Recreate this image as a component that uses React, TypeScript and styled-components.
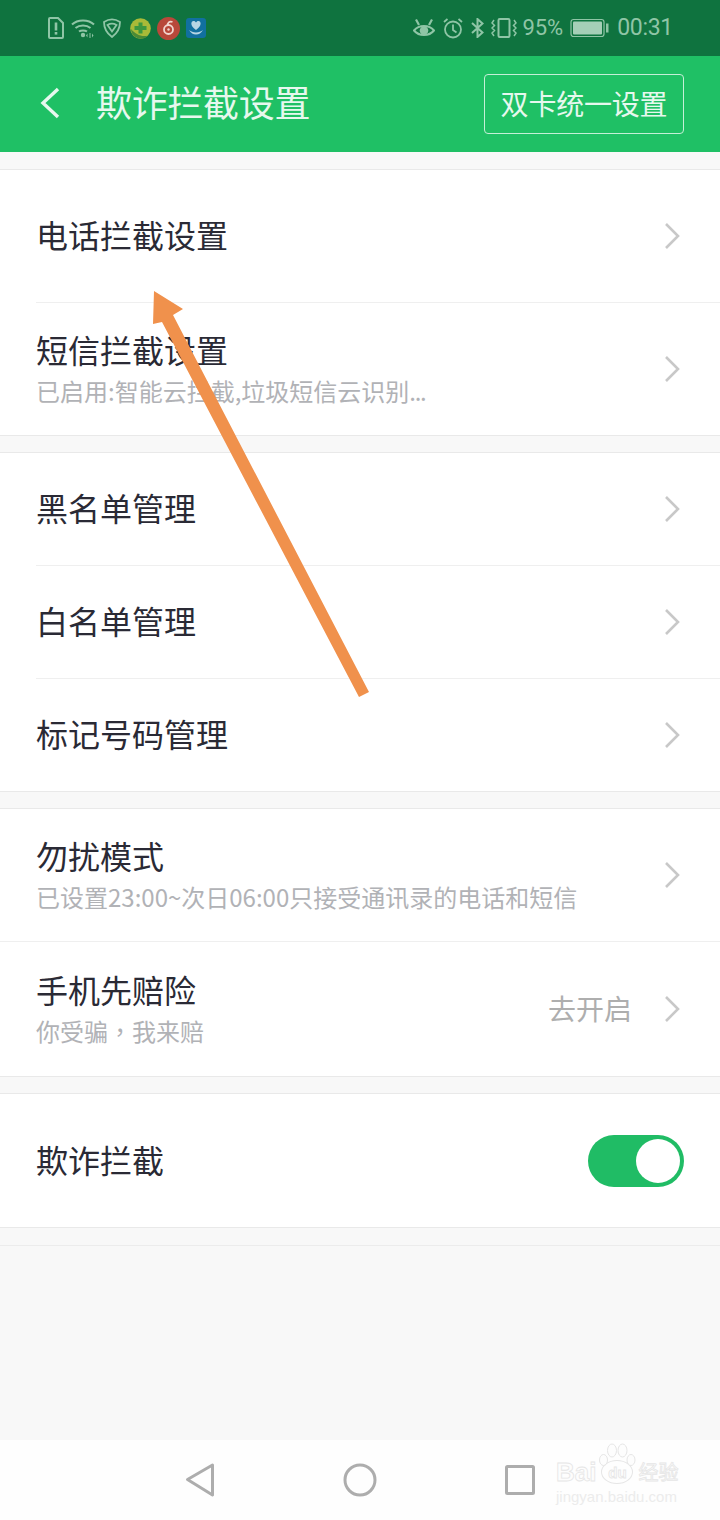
import React from "react";
import styled, { createGlobalStyle } from "styled-components";

const GlobalStyle = createGlobalStyle`
  html, body {
    margin: 0;
    padding: 0;
    background: #f9f9f9;
    font-family: "Noto Sans CJK SC", "Noto Sans", sans-serif;
  }
`;

const Page = styled.div`
  position: relative;
  width: 720px;
  height: 1520px;
  overflow: hidden;
  display: flex;
  flex-direction: column;
  background: #f9f9f9;
`;

const StatusBar = styled.div`
  height: 56px;
  flex: none;
  background: #0f733f;
  display: flex;
  align-items: center;
  justify-content: space-between;
  padding: 0 47px 0 48px;
`;

const StatusGroup = styled.div`
  display: flex;
  align-items: center;
`;

const StatusText = styled.span<{ size: number; gap?: number; track?: number }>`
  font-family: Roboto, "Liberation Sans", sans-serif;
  font-size: ${({ size }) => size}px;
  letter-spacing: ${({ track }) => track ?? 0}px;
  margin-right: ${({ gap }) => gap ?? 0}px;
  line-height: 28px;
  color: #8fc5a6;
`;

const StatusIcon = styled.svg<{ gap?: number }>`
  display: block;
  flex: none;
  margin-right: ${({ gap }) => gap ?? 0}px;
`;

const Header = styled.div`
  height: 96px;
  flex: none;
  background: #1fc065;
  display: flex;
  align-items: center;
  padding: 0 36px 0 38px;
`;

const BackArrow = styled.svg`
  width: 24px;
  height: 34px;
  flex: none;
  margin-top: -2px;
`;

const Title = styled.div`
  margin-left: 34px;
  margin-top: -6px;
  flex: 1;
  font-size: 36px;
  line-height: 50px;
  letter-spacing: -0.3px;
  color: #e6f8ee;
`;

const HeaderButton = styled.div`
  width: 200px;
  height: 60px;
  box-sizing: border-box;
  border: 1.5px solid #c5efd7;
  border-radius: 4px;
  display: flex;
  align-items: center;
  justify-content: center;
  padding-bottom: 2px;
  font-size: 28px;
  letter-spacing: -0.2px;
  color: #e6f8ee;
`;

const Content = styled.div`
  flex: 1;
  display: flex;
  flex-direction: column;
  padding-top: 17px;
  background: #f8f8f8;
`;

const Section = styled.div<{ after?: number }>`
  background: #fff;
  border-top: 1px solid #e9e9e9;
  border-bottom: 1px solid #e9e9e9;
  margin-bottom: ${({ after }) => after ?? 16}px;
`;

const RowWrap = styled.div<{ h: number; line?: boolean; full?: boolean }>`
  height: ${({ h }) => h}px;
  box-sizing: border-box;
  margin-left: ${({ full }) => (full ? 0 : 36)}px;
  padding: 0 36px 0 ${({ full }) => (full ? 36 : 0)}px;
  display: flex;
  align-items: center;
  border-bottom: ${({ line }) => (line ? "1px solid #efefef" : "none")};
`;

const RowText = styled.div`
  flex: 1;
  min-width: 0;
`;

const RowTitle = styled.div`
  font-size: 32px;
  line-height: 42px;
  margin-bottom: 4px;
  color: #2a2a35;
`;

const RowSub = styled.div`
  font-size: 24px;
  line-height: 34px;
  padding-bottom: 2px;
  color: #b1b2b6;
`;

const CenteredComma = styled.span`
  font-family: "Noto Sans CJK TC", sans-serif;
`;

const TightDots = styled.span`
  letter-spacing: -1.3px;
`;

const RowValue = styled.span`
  font-size: 28px;
  color: #aeaeae;
  margin-right: 32px;
  padding-bottom: 2px;
`;

const Chevron = styled.svg`
  width: 16px;
  height: 28px;
  flex: none;
  margin-right: 4px;
`;

const Toggle = styled.div`
  width: 96px;
  height: 52px;
  border-radius: 26px;
  background: #20bc65;
  display: flex;
  align-items: center;
  justify-content: flex-end;
  padding-right: 4px;
  box-sizing: border-box;
`;

const ToggleKnob = styled.div`
  width: 44px;
  height: 44px;
  border-radius: 50%;
  background: #fff;
`;

const EmptyLine = styled.div`
  height: 1px;
  background: #ececec;
`;

const NavBar = styled.div`
  height: 80px;
  flex: none;
  background: #fefefe;
  display: flex;
  align-items: center;
  justify-content: center;
  gap: 124px;
`;

const NavIcon = styled.svg`
  width: 36px;
  height: 36px;
  display: block;
`;

const ArrowOverlay = styled.svg`
  position: absolute;
  left: 0;
  top: 0;
  width: 720px;
  height: 1520px;
  pointer-events: none;
`;

const Watermark = styled.div`
  position: absolute;
  left: 556px;
  top: 1460px;
  width: 126px;
  font-family: "Liberation Sans", sans-serif;
`;

const WatermarkMain = styled.div`
  display: flex;
  align-items: center;
  height: 24px;
  color: #fdfdfd;
  -webkit-text-stroke: 0.8px #e6e6e6;
  white-space: nowrap;
`;

const WatermarkBai = styled.span`
  font-size: 26px;
  font-weight: 700;
  line-height: 24px;
`;

const WatermarkDu = styled.span`
  position: relative;
  width: 32px;
  height: 24px;
  margin: 0 5px 0 5px;
  border: 1px solid #e6e6e6;
  border-radius: 50%;
  box-sizing: border-box;
  display: flex;
  align-items: center;
  justify-content: center;
  font-size: 15px;
  font-weight: 700;
`;

const WatermarkPaw = styled.svg`
  position: absolute;
  left: -4px;
  top: -18px;
  width: 38px;
  height: 24px;
`;

const WatermarkCjk = styled.span`
  font-family: "Noto Sans CJK SC", sans-serif;
  font-size: 20px;
  line-height: 24px;
`;

const WatermarkBottom = styled.div`
  font-size: 15px;
  line-height: 18px;
  white-space: nowrap;
  margin-top: 4px;
  color: #ececec;
`;

const ChevronIcon = () => (
  <Chevron viewBox="0 0 16 28">
    <path d="M2 2 L14 14 L2 26" fill="none" stroke="#c8c8c8" strokeWidth="2.6" />
  </Chevron>
);

type RowProps = {
  title: string;
  sub?: React.ReactNode;
  value?: string;
  h: number;
  line?: boolean;
  full?: boolean;
};

const Row = ({ title, sub, value, h, line, full }: RowProps) => (
  <RowWrap h={h} line={line} full={full}>
    <RowText>
      <RowTitle>{title}</RowTitle>
      {sub && <RowSub>{sub}</RowSub>}
    </RowText>
    {value && <RowValue>{value}</RowValue>}
    <ChevronIcon />
  </RowWrap>
);

const tint = "#8fc5a6";

const App = () => (
  <Page>
    <GlobalStyle />
    <StatusBar>
      <StatusGroup>
        {/* sim alert */}
        <StatusIcon width="16" height="22" viewBox="0 0 16 22" gap={7}>
          <path d="M2 1h8l5 5v14a1 1 0 0 1-1 1H2a1 1 0 0 1-1-1V2a1 1 0 0 1 1-1z" fill="none" stroke={tint} strokeWidth="2" />
          <rect x="6.700" y="5.500" width="2.600" height="8" fill={tint} />
          <rect x="6.700" y="15" width="2.600" height="2.600" fill={tint} />
        </StatusIcon>
        {/* wifi */}
        <StatusIcon width="24" height="20" viewBox="0 0 24 20" gap={8}>
          <path d="M1 6.500C6.500 1 17.500 1 23 6.500M4.500 10C8.500 6.500 15.500 6.500 19.500 10M8 13.500C10 12 14 12 16 13.500" fill="none" stroke={tint} strokeWidth="2" />
          <circle cx="12" cy="17" r="2.200" fill={tint} />
          <path d="M16.500 15.500l-1.500 2 1.500 2zM21 15.500l1.500 2-1.500 2z" fill={tint} />
          <rect x="18.500" y="15" width="1" height="5" fill={tint} />
        </StatusIcon>
        {/* shield */}
        <StatusIcon width="18" height="20" viewBox="0 0 18 20" gap={9}>
          <path d="M1 4C6 .7 12 .7 17 4c0 6-2.500 11-8 15C3.500 15 1 10 1 4z" fill="none" stroke={tint} strokeWidth="1.800" />
          <path d="M4.500 7C7 5.500 11 5.500 13.500 7L9 13.500z" fill="none" stroke={tint} strokeWidth="1.800" />
        </StatusIcon>
        {/* game app */}
        <StatusIcon width="21" height="21" viewBox="0 0 21 21" gap={6}>
          <circle cx="10.500" cy="10.500" r="10.300" fill="#a9ba38" />
          <path d="M1 11a9.800 9.800 0 0 0 17 6.500C12 19.500 5 16 1 11z" fill="#4b8a37" />
          <path d="M8.500 4.500h4v3.500h4v4h-4v3.500h-4V12h-4V8h4z" fill="#3c973f" />
        </StatusIcon>
        {/* music app */}
        <StatusIcon width="23" height="23" viewBox="0 0 23 23" gap={6}>
          <circle cx="11.500" cy="11.500" r="11.500" fill="#b8483a" />
          <circle cx="11.500" cy="12.500" r="4.500" fill="none" stroke="#f2d6cf" strokeWidth="1.800" />
          <circle cx="11.500" cy="12.500" r="1.200" fill="#f2d6cf" />
          <path d="M15.500 5c-3-1.200-5.500 1-4.800 4" fill="none" stroke="#f2d6cf" strokeWidth="1.800" />
        </StatusIcon>
        {/* heart app */}
        <StatusIcon width="20" height="20" viewBox="0 0 20 20">
          <rect width="20" height="20" rx="3" fill="#11709f" />
          <path d="M10 12C3.500 7.500 5 3 7.500 3c1.300 0 2 .7 2.500 1.500C10.500 3.700 11.200 3 12.500 3c2.500 0 4 4.500-2.500 9z" fill="#b6d6e3" />
          <path d="M3 12c2 3 4 4.500 7 4.500s5-1.500 7-4.500c-2 1.500-4 2.500-7 2.500S5 13.500 3 12z" fill="#b6d6e3" />
        </StatusIcon>
      </StatusGroup>
      <StatusGroup>
        {/* eye */}
        <StatusIcon width="22" height="20" viewBox="0 0 22 20" gap={8}>
          <path d="M1 12.500C6 6.500 16 6.500 21 12.500 16 18.500 6 18.500 1 12.500z" fill="none" stroke={tint} strokeWidth="2" />
          <circle cx="11" cy="12.500" r="4.300" fill={tint} />
          <path d="M3 1.500l3 5.500M19 1.500l-3 5.500" stroke={tint} strokeWidth="2.200" />
        </StatusIcon>
        {/* alarm */}
        <StatusIcon width="20" height="21" viewBox="0 0 20 21" gap={8}>
          <circle cx="10" cy="11.500" r="8" fill="none" stroke={tint} strokeWidth="1.800" />
          <path d="M10 6.500v5.500l3.500 2.500M1 4l3.500-3M19 4l-3.500-3" fill="none" stroke={tint} strokeWidth="1.800" />
        </StatusIcon>
        {/* bluetooth */}
        <StatusIcon width="13" height="20" viewBox="0 0 13 20" gap={7}>
          <path d="M1 5l10.500 9.500-5 4.500V1l5 4.500L1 15" fill="none" stroke={tint} strokeWidth="2" />
        </StatusIcon>
        {/* vibrate */}
        <StatusIcon width="26" height="20" viewBox="0 0 26 20" gap={5}>
          <rect x="7.500" y="1" width="11" height="18" rx="1.200" fill="none" stroke={tint} strokeWidth="2" />
          <path d="M3 2L1 5l2.500 2.500L1 10l2.500 2.500L1 15l2 3M23 2l2 3-2.500 2.500L25 10l-2.500 2.500L25 15l-2 3" fill="none" stroke={tint} strokeWidth="1.500" />
        </StatusIcon>
        <StatusText size={22} gap={7}>95%</StatusText>
        {/* battery */}
        <StatusIcon width="39" height="20" viewBox="0 0 39 20" gap={8}>
          <rect x="1" y="1.500" width="33" height="17" rx="2.500" fill="none" stroke={tint} strokeWidth="1.200" />
          <rect x="3" y="3.500" width="29" height="13" rx="1" fill="#a5cfb7" />
          <rect x="36" y="5.500" width="2.500" height="9" fill={tint} />
        </StatusIcon>
        <StatusText size={23} track={-0.3}>00:31</StatusText>
      </StatusGroup>
    </StatusBar>
    <Header>
      <BackArrow viewBox="0 0 24 34">
        <path d="M20 3 L5 17 L20 31" fill="none" stroke="#e6f8ee" strokeWidth="3.400" />
      </BackArrow>
      <Title>欺诈拦截设置</Title>
      <HeaderButton>双卡统一设置</HeaderButton>
    </Header>
    <Content>
      <Section>
        <Row title="电话拦截设置" h={133} line />
        <Row
          title="短信拦截设置"
          sub={<>已启用:智能云拦截,垃圾短信云识别<TightDots>...</TightDots></>}
          h={132}
        />
      </Section>
      <Section>
        <Row title="黑名单管理" h={113} line />
        <Row title="白名单管理" h={113} line />
        <Row title="标记号码管理" h={112} />
      </Section>
      <Section>
        <Row title="勿扰模式" sub="已设置23:00~次日06:00只接受通讯录的电话和短信" h={133} line full />
        <Row
          title="手机先赔险"
          sub={<>你受骗<CenteredComma>，</CenteredComma>我来赔</>}
          value="去开启"
          h={134}
          full
        />
      </Section>
      <Section after={17}>
        <RowWrap h={133} full>
          <RowText>
            <RowTitle>欺诈拦截</RowTitle>
          </RowText>
          <Toggle>
            <ToggleKnob />
          </Toggle>
        </RowWrap>
      </Section>
      <EmptyLine />
    </Content>
    <NavBar>
      <NavIcon viewBox="0 0 36 36">
        <path d="M30.500 3 L5.500 17.500 L30.500 33 Z" fill="none" stroke="#adadad" strokeWidth="3" strokeLinejoin="round" />
      </NavIcon>
      <NavIcon viewBox="0 0 36 36">
        <circle cx="18" cy="18" r="15" fill="none" stroke="#adadad" strokeWidth="3" />
      </NavIcon>
      <NavIcon viewBox="0 0 36 36">
        <rect x="4.500" y="4.500" width="27" height="27" rx="1" fill="none" stroke="#adadad" strokeWidth="3" />
      </NavIcon>
    </NavBar>
    <ArrowOverlay viewBox="0 0 720 1520">
      <path d="M154 291 L183 309 L173 315 L369 692 L359 697 L162 322 L153 324 Z" fill="#f0914c" />
    </ArrowOverlay>
    <Watermark>
      <WatermarkMain>
        <WatermarkBai>Bai</WatermarkBai>
        <WatermarkDu>
          du
          <WatermarkPaw viewBox="0 0 38 24">
            <g fill="#fdfdfd" stroke="#e6e6e6" strokeWidth="1">
              <ellipse cx="5.500" cy="17" rx="4" ry="5.500" />
              <ellipse cx="14" cy="7.500" rx="4.500" ry="6.500" />
              <ellipse cx="24.500" cy="7.500" rx="4.500" ry="6.500" />
              <ellipse cx="33" cy="17" rx="4" ry="5.500" />
            </g>
          </WatermarkPaw>
        </WatermarkDu>
        <WatermarkCjk>经验</WatermarkCjk>
      </WatermarkMain>
      <WatermarkBottom>jingyan.baidu.com</WatermarkBottom>
    </Watermark>
  </Page>
);

export default App;
